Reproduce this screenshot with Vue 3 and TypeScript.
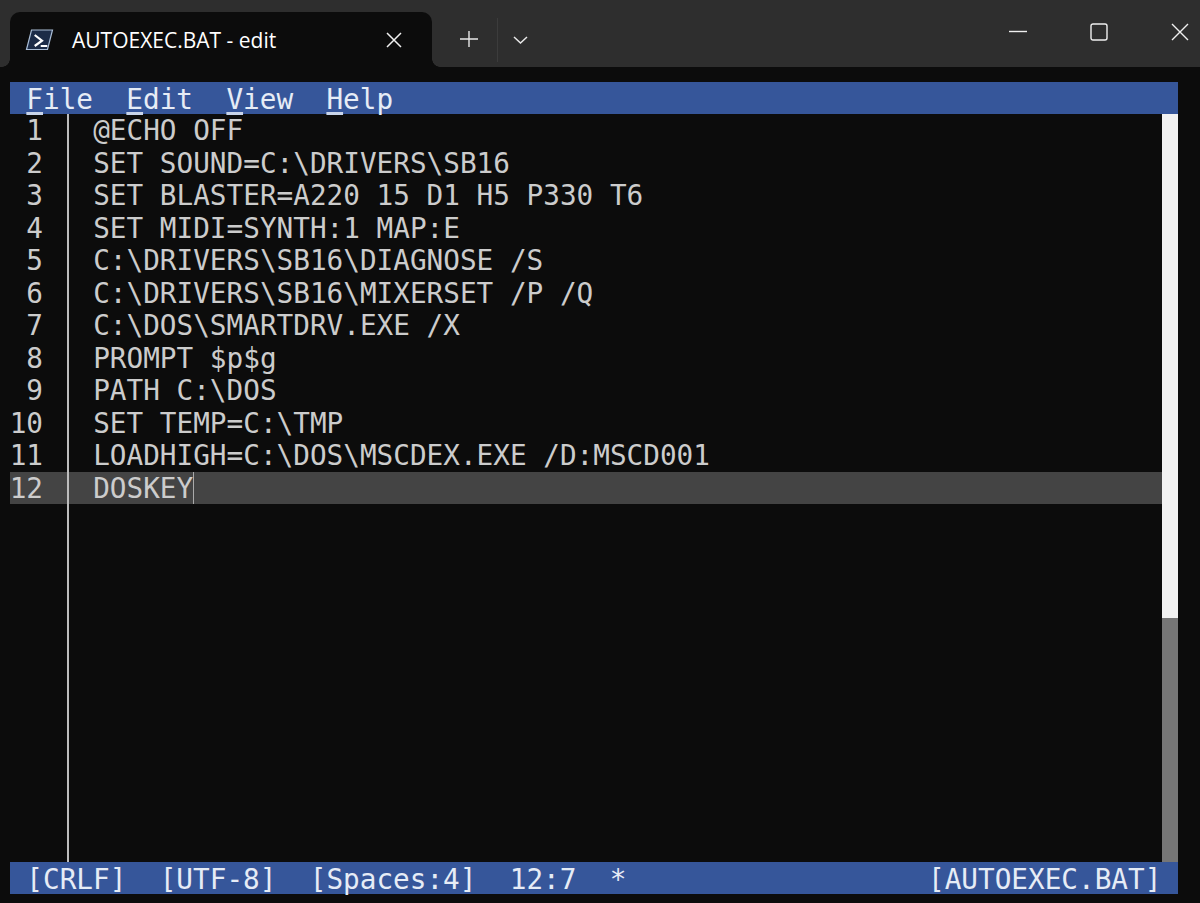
<script setup lang="ts">
const lines: string[] = [
  '@ECHO OFF',
  'SET SOUND=C:\\DRIVERS\\SB16',
  'SET BLASTER=A220 15 D1 H5 P330 T6',
  'SET MIDI=SYNTH:1 MAP:E',
  'C:\\DRIVERS\\SB16\\DIAGNOSE /S',
  'C:\\DRIVERS\\SB16\\MIXERSET /P /Q',
  'C:\\DOS\\SMARTDRV.EXE /X',
  'PROMPT $p$g',
  'PATH C:\\DOS',
  'SET TEMP=C:\\TMP',
  'LOADHIGH=C:\\DOS\\MSCDEX.EXE /D:MSCD001',
  'DOSKEY',
]
const menus = [
  { key: 'F', rest: 'ile' },
  { key: 'E', rest: 'dit' },
  { key: 'V', rest: 'iew' },
  { key: 'H', rest: 'elp' },
]
const statusLeft = '[CRLF]  [UTF-8]  [Spaces:4]  12:7  *'
</script>

<template>
  <div class="window">
    <header class="titlebar">
      <div class="tab">
        <svg class="ps-icon" width="29" height="22" viewBox="0 0 29 22">
          <polygon points="6.5,1 27.5,1 22.5,20.5 1.5,20.5" fill="#1c2c48" stroke="#a9bdd6" stroke-width="1.2" />
          <path d="M9.7 6 L17 11.7 L9.7 17" fill="none" stroke="#fff" stroke-width="2.2" />
          <path d="M15.7 17 H22.3" fill="none" stroke="#fff" stroke-width="2" />
        </svg>
        <span class="tab-title">AUTOEXEC.BAT - edit</span>
        <svg class="tab-close" width="16" height="16" viewBox="0 0 16 16">
          <path d="M1 1 L15 15 M15 1 L1 15" stroke="#f0f0f0" stroke-width="1.5" fill="none" />
        </svg>
      </div>
      <svg class="plus" width="18" height="16" viewBox="0 0 18 16">
        <path d="M9 0 V16 M0 8 H18" stroke="#e8e8e8" stroke-width="1.4" fill="none" />
      </svg>
      <span class="divider"></span>
      <svg class="chevron" width="15" height="8" viewBox="0 0 15 8">
        <path d="M1 1 L7.5 7 L14 1" stroke="#e8e8e8" stroke-width="1.5" fill="none" />
      </svg>
      <div class="controls">
        <svg width="18" height="18" viewBox="0 0 18 18">
          <path d="M0 8.5 H18" stroke="#f0f0f0" stroke-width="1.4" fill="none" />
        </svg>
        <svg width="18" height="18" viewBox="0 0 18 18">
          <rect x="1" y="1" width="16" height="16" rx="2" stroke="#f0f0f0" stroke-width="1.4" fill="none" />
        </svg>
        <svg width="18" height="18" viewBox="0 0 18 18">
          <path d="M1 1 L17 17 M17 1 L1 17" stroke="#f0f0f0" stroke-width="1.4" fill="none" />
        </svg>
      </div>
    </header>

    <main class="terminal">
      <nav class="menubar">
        <span v-for="m in menus" :key="m.key" class="menu-item"><u>{{ m.key }}</u>{{ m.rest }}</span>
      </nav>
      <div class="editor">
        <div class="rows">
          <div
            v-for="(line, i) in lines"
            :key="i"
            class="row"
            :class="{ current: i === lines.length - 1 }"
          >
            <span class="num">{{ i + 1 }}</span>
            <span class="code">{{ line }}<i v-if="i === lines.length - 1" class="caret"></i></span>
          </div>
          <div class="row filler"><span class="num"></span></div>
        </div>
        <div class="scrollbar"><div class="thumb"></div></div>
      </div>
      <footer class="statusbar">
        <span>{{ statusLeft }}</span>
        <span>[AUTOEXEC.BAT]</span>
      </footer>
    </main>
  </div>
</template>

<style>
html, body { margin: 0; background: #0c0c0c; }
</style>

<style scoped>
.window {
  width: 1200px;
  height: 903px;
  display: flex;
  flex-direction: column;
  overflow: hidden;
  background: #0c0c0c;
}
.titlebar {
  height: 67px;
  flex: none;
  box-sizing: border-box;
  padding: 12px 0 0 10px;
  display: flex;
  align-items: flex-start;
  background: #2e2e2e;
}
.tab {
  position: relative;
  width: 422px;
  height: 55px;
  flex: none;
  box-sizing: border-box;
  display: flex;
  align-items: center;
  padding: 0 30px 0 15px;
  background: #0c0c0c;
  border-radius: 10px 10px 0 0;
}
.tab::before,
.tab::after {
  content: "";
  position: absolute;
  bottom: 0;
  width: 8px;
  height: 8px;
}
.tab::before {
  left: -8px;
  background: radial-gradient(circle at 0 0, #2e2e2e 7.5px, #0c0c0c 8px);
}
.tab::after {
  right: -8px;
  background: radial-gradient(circle at 100% 0, #2e2e2e 7.5px, #0c0c0c 8px);
}
.ps-icon { flex: none; }
.tab-title {
  margin-left: 18px;
  font-family: "Open Sans", "Noto Sans", sans-serif;
  font-size: 21px;
  color: #fff;
  white-space: nowrap;
}
.tab-close { margin-left: auto; flex: none; }
.plus { margin: 19px 0 0 28px; flex: none; }
.divider {
  width: 1px;
  height: 44px;
  margin: 6px 0 0 19px;
  background: #3c3c3c;
  flex: none;
}
.chevron { margin: 24px 0 0 15px; flex: none; }
.controls {
  margin-left: auto;
  margin-right: 11.5px;
  margin-top: 11px;
  display: flex;
  gap: 63px;
}
.terminal {
  flex: 1;
  min-height: 0;
  display: flex;
  flex-direction: column;
  padding: 15px 22px 9px 9.7px;
  font-family: "DejaVu Sans Mono", "Liberation Mono", monospace;
  font-size: 27.7px;
  color: #cccccc;
  white-space: pre;
}
.menubar,
.statusbar {
  height: 32px;
  flex: none;
  line-height: 36px;
  background: #36569a;
  color: #e6ecf6;
  padding-left: 16.67px;
}
.menubar { display: flex; gap: 33.34px; }
.statusbar {
  display: flex;
  justify-content: space-between;
  padding-right: 16.67px;
}
.menu-item u {
  text-underline-offset: 3px;
  text-decoration-thickness: 2.5px;
  text-decoration-skip-ink: none;
  text-decoration-color: #c9d5ea;
}
.editor {
  flex: 1;
  min-height: 0;
  display: flex;
}
.rows {
  flex: 1;
  min-width: 0;
  display: flex;
  flex-direction: column;
}
.row {
  height: 32.5px;
  flex: none;
  line-height: 34px;
  display: flex;
}
.row.current { height: 32px; background: #444444; }
.row.filler { flex: 1; }
.num {
  width: 59.5px;
  height: 100%;
  flex: none;
  box-sizing: border-box;
  text-align: right;
  padding-right: 24.2px;
  border-right: 2.5px solid #bdbdbd;
}
.code {
  padding-left: 24px;
  display: flex;
}
.caret {
  width: 1px;
  background: #aaaaaa;
}
.scrollbar {
  width: 16.5px;
  flex: none;
  background: #767676;
}
.thumb {
  height: 504px;
  background: #f2f2f2;
}
</style>
